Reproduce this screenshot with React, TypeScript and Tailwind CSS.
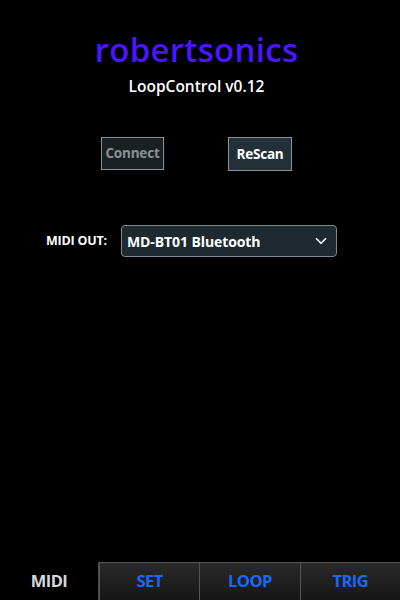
import { ChevronDown } from 'lucide-react';

const tabs = ['MIDI', 'SET', 'LOOP', 'TRIG'];

export default function App() {
  return (
    <div
      className="w-[400px] h-[600px] bg-black flex flex-col text-white"
      style={{ fontFamily: '"Open Sans", "DejaVu Sans", sans-serif' }}
    >
      <div className="flex-1 flex flex-col">
        <div className="pt-[30px] pr-[7px] flex flex-col items-center">
          <div className="text-[33px] leading-[40px] font-semibold text-[#4a16ff] tracking-[0.3px]">robertsonics</div>
          <div className="text-[15.5px] leading-[20px] mt-[6px] font-semibold">LoopControl v0.12</div>
        </div>

        <div className="flex mt-[41px] h-[34px]">
          <button className="ml-[101px] w-[63px] h-[33px] border border-[#8a9394] bg-[#182022] text-[#8a9394] text-[13.5px] font-bold tracking-[-0.2px]">
            Connect
          </button>
          <button className="ml-[64px] w-[64px] h-[34px] border border-[#8a9394] bg-[#233037] text-white text-[13.5px] font-bold tracking-[-0.2px]">
            ReScan
          </button>
        </div>

        <div className="flex items-center mt-[54px]">
          <span className="ml-[46px] w-[75px] text-[12.5px] font-bold tracking-[-0.2px]">MIDI OUT:</span>
          <div className="w-[216px] h-[32px] rounded-[4px] border border-[#7d8a90] bg-[#1e2a30] flex items-center justify-between pl-[5px] pr-[6px]">
            <span className="text-[14px] font-bold tracking-[-0.1px]">MD-BT01 Bluetooth</span>
            <ChevronDown className="w-[18px] h-[18px]" strokeWidth={2.2} />
          </div>
        </div>
      </div>

      <div className="h-[38px] flex bg-black">
        {tabs.map((t, i) => (
          <div
            key={t}
            className={
              i === 0
                ? 'w-[99px] flex items-center justify-center text-[16.5px] font-bold text-[#d6d8dc] tracking-[-0.5px] bg-black border-r border-[#4a4a4a]'
                : 'flex-1 flex items-center justify-center text-[16.5px] font-bold text-[#1668ff] tracking-[-0.5px] bg-gradient-to-b from-[#2a2a2a] to-[#161616] border-t border-[#555] border-l border-[#3a3a3a]'
            }
          >
            {t}
          </div>
        ))}
      </div>
    </div>
  );
}
